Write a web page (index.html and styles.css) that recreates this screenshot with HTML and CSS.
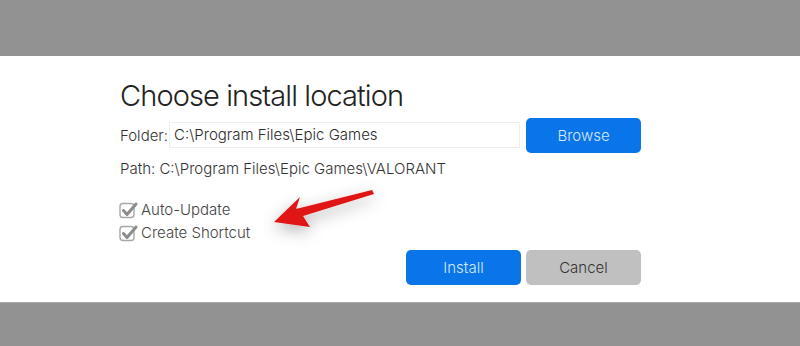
FILE: index.html
```html
<!DOCTYPE html>
<html>
	<head>
		<meta charset="UTF-8">
		<title>Choose install location</title>
		<link rel="stylesheet" href="styles.css">
	</head>
	<body>
		<div class="band"></div>
		<div class="dialog">
			<div class="content">
				<h1 class="title">Choose install location</h1>
				<div class="row folder">
					<span class="label">Folder:</span>
					<div class="input">C:\Program Files\Epic Games</div>
					<button class="btn blue">Browse</button>
				</div>
				<div class="path">Path: C:\Program Files\Epic Games\VALORANT</div>
				<ul class="checks">
					<li>
						<svg class="box" width="20" height="18" viewBox="0 0 20 18">
							<rect x="1" y="2.5" width="14" height="14" rx="3" fill="#fff" stroke="#a8a8a8" stroke-width="1.4"/>
							<path d="M4.5 9.5 L8 13.5 L17 3" fill="none" stroke="#8c8c8c" stroke-width="3" stroke-linecap="round" stroke-linejoin="round"/>
						</svg>
						Auto-Update
					</li>
					<li>
						<svg class="box" width="20" height="18" viewBox="0 0 20 18">
							<rect x="1" y="2.5" width="14" height="14" rx="3" fill="#fff" stroke="#a8a8a8" stroke-width="1.4"/>
							<path d="M4.5 9.5 L8 13.5 L17 3" fill="none" stroke="#8c8c8c" stroke-width="3" stroke-linecap="round" stroke-linejoin="round"/>
						</svg>
						Create Shortcut
					</li>
				</ul>
				<div class="actions">
					<button class="btn blue">Install</button>
					<button class="btn grey">Cancel</button>
				</div>
			</div>
		</div>
		<div class="band bottom"></div>

		<svg class="arrow" width="800" height="346" viewBox="0 0 800 346">
			<defs>
				<filter id="shadow" x="-50%" y="-100%" width="200%" height="300%">
					<feDropShadow dx="0" dy="5" stdDeviation="8" flood-color="#000" flood-opacity="0.3"/>
				</filter>
			</defs>
			<polygon points="274,222 300,197 296,209 372,190 374,194 303,216 310,227" fill="#e01414" filter="url(#shadow)"/>
		</svg>
	</body>
</html>
```

FILE: styles.css
```css
body, ul, h1 {
	padding: 0;
	margin: 0;
}
li {
	list-style: none;
}

body {
	background-color: #929292;
	font-family: Inter, "Noto Sans", sans-serif;
	color: #333;
	height: 346px;
	overflow: hidden;
}

.band {
	height: 56px;
}
.band.bottom {
	height: 43px;
	border-top: 1px solid #a8a8a8;
}

.dialog {
	height: 246px;
	background-color: #fff;
}

.content {
	width: 521px;
	padding: 22px 0 0 120px;
}

.title {
	font-size: 29px;
	font-weight: 300;
	line-height: 36px;
	color: #222;
	letter-spacing: -0.9px;
}

.row {
	display: flex;
	align-items: center;
}

.folder {
	margin-top: 3px;
	height: 36px;
}

.label, .path, .checks li {
	font-size: 15px;
	font-weight: 300;
}

.input {
	flex: 1;
	height: 24px;
	line-height: 24px;
	margin: 0 6px 0 1px;
	padding-left: 4px;
	border: 1px solid #eee;
	font-size: 15px;
	font-weight: 300;
	color: #2a2a2a;
}

.btn {
	width: 115px;
	height: 35px;
	border: none;
	border-radius: 5px;
	font-family: Inter, "Noto Sans", sans-serif;
	font-size: 15px;
	font-weight: 300;
}
.btn.blue {
	background-color: #0a74e9;
	color: #d6e8ff;
}
.btn.grey {
	background-color: #c0c0c0;
	color: #333;
}

.path {
	margin-top: 4px;
	line-height: 24px;
}

.checks {
	margin-top: 17px;
}
.checks li {
	display: flex;
	align-items: center;
	gap: 2px;
	height: 23px;
	color: #444;
}
.box {
	margin-left: -1px;
}

.actions {
	display: flex;
	justify-content: flex-end;
	gap: 5px;
	margin-top: 6px;
}

.arrow {
	position: absolute;
	left: 0;
	top: 0;
	pointer-events: none;
}
```
